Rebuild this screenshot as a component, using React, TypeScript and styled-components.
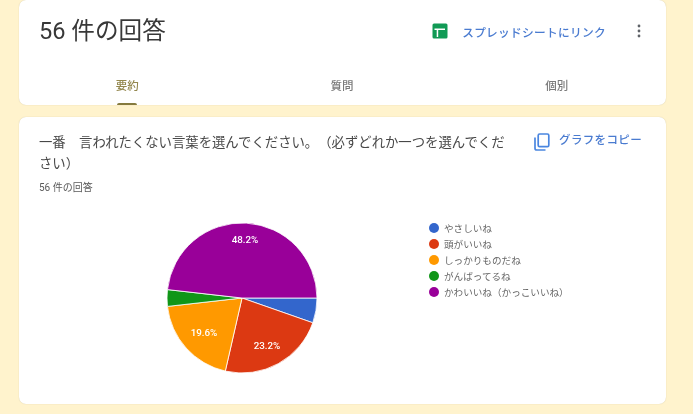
import React from "react";
import styled, { createGlobalStyle } from "styled-components";

const Global = createGlobalStyle`
  html, body { margin: 0; padding: 0; background: #fff3cd; overflow: hidden; }
  body { font-family: Roboto, "Noto Sans CJK JP", sans-serif; text-spacing-trim: space-all; }
`;

const Page = styled.div`
  width: 693px;
  height: 414px;
  box-sizing: border-box;
  padding: 0 27px 0 19px;
  background: #fff3cd;
  display: flex;
  flex-direction: column;
  gap: 12px;
  overflow: hidden;
  filter: blur(0.6px);
`;

const Card = styled.section`
  background: #fff;
  border-radius: 7px;
  box-shadow: 0 0 1px rgba(120, 110, 70, 0.35);
`;

const SummaryCard = styled(Card)`
  height: 105px;
  display: flex;
  flex-direction: column;
  flex: none;
`;

const Header = styled.header`
  display: flex;
  align-items: center;
  height: 62px;
  padding: 0 25px 0 20px;
`;

const Title = styled.h1`
  margin: 0;
  font-size: 23.6px;
  line-height: 32px;
  font-weight: 400;
  color: #383838;
  flex: 1;
`;

const SheetLink = styled.a`
  display: flex;
  align-items: center;
  gap: 14px;
  font-size: 11.7px;
  font-weight: 500;
  color: #4a7bd0;
  letter-spacing: 0.3px;
`;

const MoreButton = styled.span`
  display: flex;
  margin-left: 31px;
  color: #5f6368;
`;

const Tabs = styled.nav`
  display: grid;
  grid-template-columns: repeat(3, 1fr);
  flex: 1;
  padding: 0 2px 0 0;
  margin-left: 1px;
`;

const Tab = styled.div<{ $active?: boolean }>`
  display: flex;
  flex-direction: column;
  align-items: center;
  justify-content: flex-start;
  padding-top: 16px;
  font-size: 11.5px;
  line-height: 16px;
  font-weight: 500;
  color: ${(p) => (p.$active ? "#94884f" : "#7a7a7a")};
  position: relative;
  &::after {
    content: "";
    display: ${(p) => (p.$active ? "block" : "none")};
    position: absolute;
    left: calc(50% - 10px);
    bottom: 0;
    width: 20px;
    height: 2px;
    background: #857a3e;
    border-radius: 2px 2px 0 0;
  }
`;

const QuestionCard = styled(Card)`
  height: 287px;
  flex: none;
  padding: 15px 20px 0 20px;
  box-sizing: border-box;
`;

const QuestionHead = styled.div`
  display: flex;
  align-items: flex-start;
  justify-content: space-between;
`;

const Question = styled.h2`
  margin: 0;
  width: 475px;
  font-size: 13.37px;
  line-height: 21px;
  font-weight: 400;
  color: #484848;
`;

const CopyLink = styled.a`
  display: flex;
  align-items: flex-start;
  gap: 9px;
  margin-right: 4px;
  font-size: 11.5px;
  line-height: 16px;
  font-weight: 500;
  color: #4a7bd0;
  letter-spacing: 0.35px;
  & > svg {
    margin-top: 1px;
  }
`;

const ResponseCount = styled.div`
  margin-top: 8px;
  font-size: 10px;
  line-height: 12px;
  color: #5a5a5a;
`;

const ChartRow = styled.div`
  display: flex;
  align-items: flex-start;
  margin-top: 26px;
`;

const PieWrap = styled.svg`
  display: block;
  margin: 2px 0 0 127px;
  flex: none;
`;

const PieLabel = styled.text`
  font-size: 9.8px;
  font-weight: 500;
  fill: #fff;
  text-anchor: middle;
`;

const Legend = styled.ul`
  list-style: none;
  margin: 0 0 0 111px;
  padding: 0;
  display: flex;
  flex-direction: column;
`;

const LegendItem = styled.li`
  display: flex;
  align-items: center;
  gap: 5px;
  height: 16px;
  font-size: 9.6px;
  color: #666;
`;

const Dot = styled.span<{ $color: string }>`
  width: 10px;
  height: 10px;
  border-radius: 50%;
  background: ${(p) => p.$color};
  flex: none;
`;

const slices = [
  { name: "やさしいね", value: 3, color: "#3366cc" },
  { name: "頭がいいね", value: 13, color: "#dc3912" },
  { name: "しっかりものだね", value: 11, color: "#ff9900" },
  { name: "がんばってるね", value: 2, color: "#109618" },
  { name: "かわいいね（かっこいいね）", value: 27, color: "#990099" },
];

const CX = 76;
const CY = 76;
const R = 75;

function Pie() {
  const total = slices.reduce((s, x) => s + x.value, 0);
  let angle = 0;
  return (
    <PieWrap width={152} height={152} viewBox="0 0 152 152">
      {slices.map((s) => {
        const a0 = angle;
        const a1 = angle + (s.value / total) * Math.PI * 2;
        angle = a1;
        const large = a1 - a0 > Math.PI ? 1 : 0;
        const d = `M${CX} ${CY}L${CX + R * Math.cos(a0)} ${CY + R * Math.sin(a0)}A${R} ${R} 0 ${large} 1 ${CX + R * Math.cos(a1)} ${CY + R * Math.sin(a1)}Z`;
        return <path key={s.name} d={d} fill={s.color} stroke="#fff" strokeWidth={0.8} />;
      })}
      <PieLabel x={79} y={21}>48.2%</PieLabel>
      <PieLabel x={101} y={127}>23.2%</PieLabel>
      <PieLabel x={38} y={114}>19.6%</PieLabel>
    </PieWrap>
  );
}

export default function App() {
  return (
    <Page>
      <Global />
      <SummaryCard>
        <Header>
          <Title>56 件の回答</Title>
          <SheetLink>
            <svg width="16" height="16" viewBox="0 0 16 16">
              <rect x="0.5" y="0.5" width="15" height="15" rx="1.5" fill="#119a55" />
              <path d="M2.5 5.5h10.5v1.5H6.2V14H4.7V7H2.5z" fill="#fff" />
            </svg>
            スプレッドシートにリンク
          </SheetLink>
          <MoreButton>
            <svg width="4" height="14" viewBox="0 0 4 14" fill="currentColor">
              <circle cx="2" cy="2" r="1.4" />
              <circle cx="2" cy="7" r="1.4" />
              <circle cx="2" cy="12" r="1.4" />
            </svg>
          </MoreButton>
        </Header>
        <Tabs>
          <Tab $active>要約</Tab>
          <Tab>質問</Tab>
          <Tab>個別</Tab>
        </Tabs>
      </SummaryCard>
      <QuestionCard>
        <QuestionHead>
          <Question>
            一番　言われたくない言葉を選んでください。（必ずどれか一つを選んでください）
          </Question>
          <CopyLink>
            <svg width="16" height="18" viewBox="0 0 16 18" fill="none" stroke="#4a86e0" strokeWidth="1.7">
              <rect x="4.2" y="1" width="10.6" height="12.6" rx="1.4" />
              <path d="M1 4.5v10.7c0 1 .7 1.8 1.8 1.8h8.7" />
            </svg>
            グラフをコピー
          </CopyLink>
        </QuestionHead>
        <ResponseCount>56 件の回答</ResponseCount>
        <ChartRow>
          <Pie />
          <Legend>
            {slices.map((s) => (
              <LegendItem key={s.name}>
                <Dot $color={s.color} />
                {s.name}
              </LegendItem>
            ))}
          </Legend>
        </ChartRow>
      </QuestionCard>
    </Page>
  );
}
